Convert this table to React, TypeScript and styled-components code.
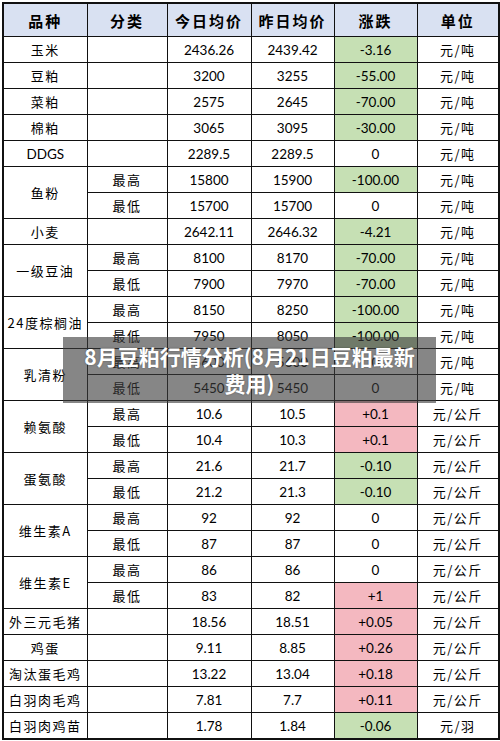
import React from "react";
import styled, { createGlobalStyle } from "styled-components";

const Global = createGlobalStyle`
  html, body { margin: 0; padding: 0; background: #ffffff; }
  body { font-family: Lato, "Noto Sans CJK SC", sans-serif; }
`;

const Page = styled.div`
  position: relative;
  width: 500px;
  height: 741px;
  padding: 2px 0 0 2px;
  box-sizing: border-box;
`;

const Table = styled.table`
  border-collapse: collapse;
  width: 496px;
  table-layout: fixed;
  border: 2px solid #111;
`;

const HeadCell = styled.th`
  height: 32px;
  padding: 0;
  background: #d9e1f2;
  border: 1px solid #111;
  font-family: "Noto Sans CJK SC", sans-serif;
  font-weight: 700;
  font-size: 15px;
  letter-spacing: 2px;
  color: #000;
  text-align: center;
`;

type Tone = "none" | "green" | "pink";

const Cell = styled.td<{ $tone?: Tone; $cjk?: boolean }>`
  height: 25px;
  padding: 0;
  border: 1px solid #111;
  text-align: center;
  color: #000;
  white-space: nowrap;
  overflow: hidden;
  background: ${(p) =>
    p.$tone === "green" ? "#c6e0b4" : p.$tone === "pink" ? "#f4b8c0" : "#ffffff"};
  font-family: ${(p) =>
    p.$cjk ? '"Noto Sans CJK SC", sans-serif' : 'Lato, "Noto Sans CJK SC", sans-serif'};
  font-size: ${(p) => (p.$cjk ? "13px" : "13.5px")};
  letter-spacing: ${(p) => (p.$cjk ? "1.5px" : "0")};
  font-weight: 400;
`;

const Overlay = styled.div`
  position: absolute;
  left: 63px;
  top: 337px;
  width: 373px;
  height: 66px;
  background: rgba(60, 60, 60, 0.62);
  display: flex;
  align-items: center;
  justify-content: center;
  box-sizing: border-box;
`;

const OverlayText = styled.div`
  max-width: 336px;
  color: #ffffff;
  font-family: "Noto Sans CJK SC", sans-serif;
  font-weight: 700;
  font-size: 21px;
  line-height: 27px;
  text-align: center;
  text-shadow: 0 0 2px rgba(0, 0, 0, 0.35);
`;

type Single = { kind: "single"; name: string; today: string; yest: string; diff: string; tone: Tone; unit: string };
type Pair = {
  kind: "pair";
  name: string;
  rows: { today: string; yest: string; diff: string; tone: Tone }[];
  unit: string;
};
type Item = Single | Pair;

const T = "元/吨";
const K = "元/公斤";

const data: Item[] = [
  { kind: "single", name: "玉米", today: "2436.26", yest: "2439.42", diff: "-3.16", tone: "green", unit: T },
  { kind: "single", name: "豆粕", today: "3200", yest: "3255", diff: "-55.00", tone: "green", unit: T },
  { kind: "single", name: "菜粕", today: "2575", yest: "2645", diff: "-70.00", tone: "green", unit: T },
  { kind: "single", name: "棉粕", today: "3065", yest: "3095", diff: "-30.00", tone: "green", unit: T },
  { kind: "single", name: "DDGS", today: "2289.5", yest: "2289.5", diff: "0", tone: "none", unit: T },
  {
    kind: "pair",
    name: "鱼粉",
    unit: T,
    rows: [
      { today: "15800", yest: "15900", diff: "-100.00", tone: "green" },
      { today: "15700", yest: "15700", diff: "0", tone: "none" },
    ],
  },
  { kind: "single", name: "小麦", today: "2642.11", yest: "2646.32", diff: "-4.21", tone: "green", unit: T },
  {
    kind: "pair",
    name: "一级豆油",
    unit: T,
    rows: [
      { today: "8100", yest: "8170", diff: "-70.00", tone: "green" },
      { today: "7900", yest: "7970", diff: "-70.00", tone: "green" },
    ],
  },
  {
    kind: "pair",
    name: "24度棕榈油",
    unit: T,
    rows: [
      { today: "8150", yest: "8250", diff: "-100.00", tone: "green" },
      { today: "7950", yest: "8050", diff: "-100.00", tone: "green" },
    ],
  },
  {
    kind: "pair",
    name: "乳清粉",
    unit: T,
    rows: [
      { today: "5600", yest: "5600", diff: "0", tone: "none" },
      { today: "5450", yest: "5450", diff: "0", tone: "none" },
    ],
  },
  {
    kind: "pair",
    name: "赖氨酸",
    unit: K,
    rows: [
      { today: "10.6", yest: "10.5", diff: "+0.1", tone: "pink" },
      { today: "10.4", yest: "10.3", diff: "+0.1", tone: "pink" },
    ],
  },
  {
    kind: "pair",
    name: "蛋氨酸",
    unit: K,
    rows: [
      { today: "21.6", yest: "21.7", diff: "-0.10", tone: "green" },
      { today: "21.2", yest: "21.3", diff: "-0.10", tone: "green" },
    ],
  },
  {
    kind: "pair",
    name: "维生素A",
    unit: K,
    rows: [
      { today: "92", yest: "92", diff: "0", tone: "none" },
      { today: "87", yest: "87", diff: "0", tone: "none" },
    ],
  },
  {
    kind: "pair",
    name: "维生素E",
    unit: K,
    rows: [
      { today: "86", yest: "86", diff: "0", tone: "none" },
      { today: "83", yest: "82", diff: "+1", tone: "pink" },
    ],
  },
  { kind: "single", name: "外三元毛猪", today: "18.56", yest: "18.51", diff: "+0.05", tone: "pink", unit: K },
  { kind: "single", name: "鸡蛋", today: "9.11", yest: "8.85", diff: "+0.26", tone: "pink", unit: K },
  { kind: "single", name: "淘汰蛋毛鸡", today: "13.22", yest: "13.04", diff: "+0.18", tone: "pink", unit: K },
  { kind: "single", name: "白羽肉毛鸡", today: "7.81", yest: "7.7", diff: "+0.11", tone: "pink", unit: K },
  { kind: "single", name: "白羽肉鸡苗", today: "1.78", yest: "1.84", diff: "-0.06", tone: "green", unit: "元/羽" },
];

const isCjk = (s: string) => /[\u4e00-\u9fff]/.test(s);

export default function App() {
  const rows: React.ReactNode[] = [];
  data.forEach((item, i) => {
    if (item.kind === "single") {
      rows.push(
        <tr key={`s${i}`}>
          <Cell $cjk={isCjk(item.name)}>{item.name}</Cell>
          <Cell />
          <Cell>{item.today}</Cell>
          <Cell>{item.yest}</Cell>
          <Cell $tone={item.tone}>{item.diff}</Cell>
          <Cell $cjk>{item.unit}</Cell>
        </tr>
      );
    } else {
      item.rows.forEach((r, j) => {
        rows.push(
          <tr key={`p${i}-${j}`}>
            {j === 0 && (
              <Cell rowSpan={2} $cjk>
                {item.name}
              </Cell>
            )}
            <Cell $cjk>{j === 0 ? "最高" : "最低"}</Cell>
            <Cell>{r.today}</Cell>
            <Cell>{r.yest}</Cell>
            <Cell $tone={r.tone}>{r.diff}</Cell>
            <Cell $cjk>{item.unit}</Cell>
          </tr>
        );
      });
    }
  });

  return (
    <Page>
      <Global />
      <Table>
        <colgroup>
          <col style={{ width: 84 }} />
          <col style={{ width: 80 }} />
          <col style={{ width: 84 }} />
          <col style={{ width: 83 }} />
          <col style={{ width: 83 }} />
          <col style={{ width: 82 }} />
        </colgroup>
        <thead>
          <tr>
            <HeadCell>品种</HeadCell>
            <HeadCell>分类</HeadCell>
            <HeadCell>今日均价</HeadCell>
            <HeadCell>昨日均价</HeadCell>
            <HeadCell>涨跌</HeadCell>
            <HeadCell>单位</HeadCell>
          </tr>
        </thead>
        <tbody>{rows}</tbody>
      </Table>
      <Overlay>
        <OverlayText>8月豆粕行情分析(8月21日豆粕最新费用)</OverlayText>
      </Overlay>
    </Page>
  );
}
